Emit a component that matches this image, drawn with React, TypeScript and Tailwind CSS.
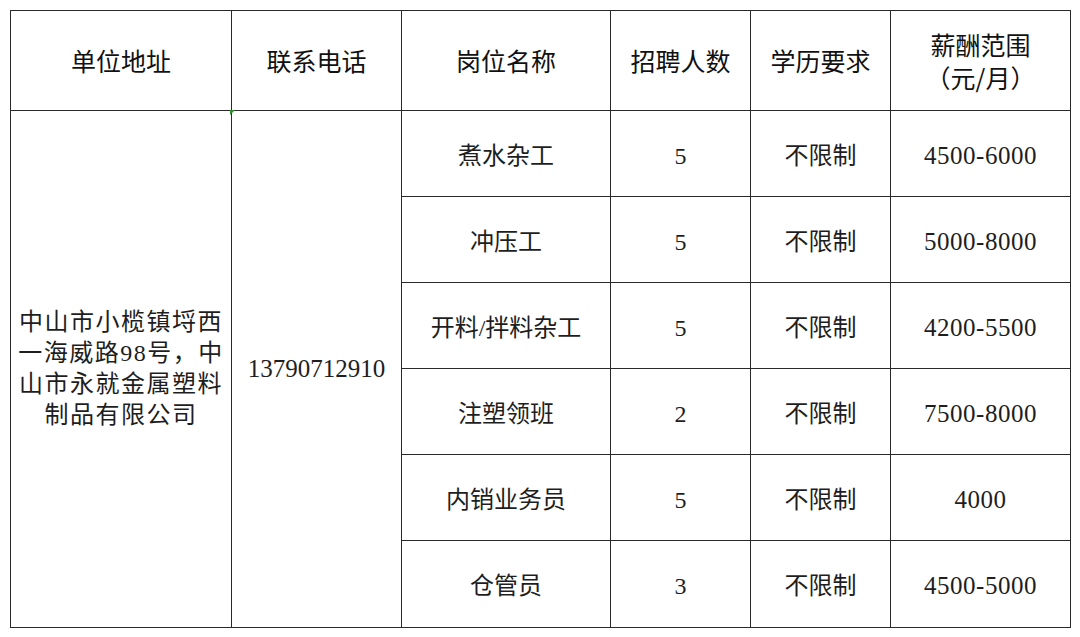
import React from "react";

const rows = [
  { job: "煮水杂工", count: "5", edu: "不限制", pay: "4500-6000" },
  { job: "冲压工", count: "5", edu: "不限制", pay: "5000-8000" },
  { job: "开料/拌料杂工", count: "5", edu: "不限制", pay: "4200-5500" },
  { job: "注塑领班", count: "2", edu: "不限制", pay: "7500-8000" },
  { job: "内销业务员", count: "5", edu: "不限制", pay: "4000" },
  { job: "仓管员", count: "3", edu: "不限制", pay: "4500-5000" },
];

const serif = "font-['Liberation_Serif','Noto_Sans_CJK_SC',serif]";
const cell = "border-[1.5px] border-[#2a2a2a] text-center align-middle p-0";

export default function App() {
  return (
    <div className="w-[1080px] h-[637px] bg-white pl-[10px] pt-[10px] relative">
      <table className="table-fixed border-collapse w-[1060px] text-[#1e1e1e]">
        <colgroup>
          <col className="w-[221px]" />
          <col className="w-[170px]" />
          <col className="w-[209px]" />
          <col className="w-[140px]" />
          <col className="w-[140px]" />
          <col className="w-[180px]" />
        </colgroup>
        <thead>
          <tr className="h-[100px] font-['Noto_Sans_CJK_SC',sans-serif] text-[25px] font-normal text-[#111]">
            <th className={`${cell} font-normal`}>单位地址</th>
            <th className={`${cell} font-normal`}>联系电话</th>
            <th className={`${cell} font-normal`}>岗位名称</th>
            <th className={`${cell} font-normal`}>招聘人数</th>
            <th className={`${cell} font-normal`}>学历要求</th>
            <th className={`${cell} font-normal leading-[33px]`}>
              <div>薪酬范围</div>
              <div>（元/月）</div>
            </th>
          </tr>
        </thead>
        <tbody className={`${serif} text-[24px]`}>
          {rows.map((r, i) => (
            <tr key={r.job} className={i === 5 ? "h-[87px]" : "h-[86px]"}>
              {i === 0 && (
                <>
                  <td rowSpan={6} className={`${cell} leading-[31px] tracking-[1.5px]`}>
                    <div>中山市小榄镇埒西</div>
                    <div>一海威路98号，中</div>
                    <div>山市永就金属塑料</div>
                    <div>制品有限公司</div>
                  </td>
                  <td rowSpan={6} className={`${cell} text-[25px]`}>
                    13790712910
                  </td>
                </>
              )}
              <td className={`${cell} pt-[4px]`}>{r.job}</td>
              <td className={`${cell} pt-[4px]`}>{r.count}</td>
              <td className={`${cell} pt-[4px]`}>{r.edu}</td>
              <td className={`${cell} pt-[4px] text-[25px] tracking-[0.5px]`}>{r.pay}</td>
            </tr>
          ))}
        </tbody>
      </table>
      <div className="absolute left-[230px] top-[110px] w-0 h-0 border-t-[5px] border-t-[#2e8b2e] border-r-[5px] border-r-transparent" />
    </div>
  );
}
